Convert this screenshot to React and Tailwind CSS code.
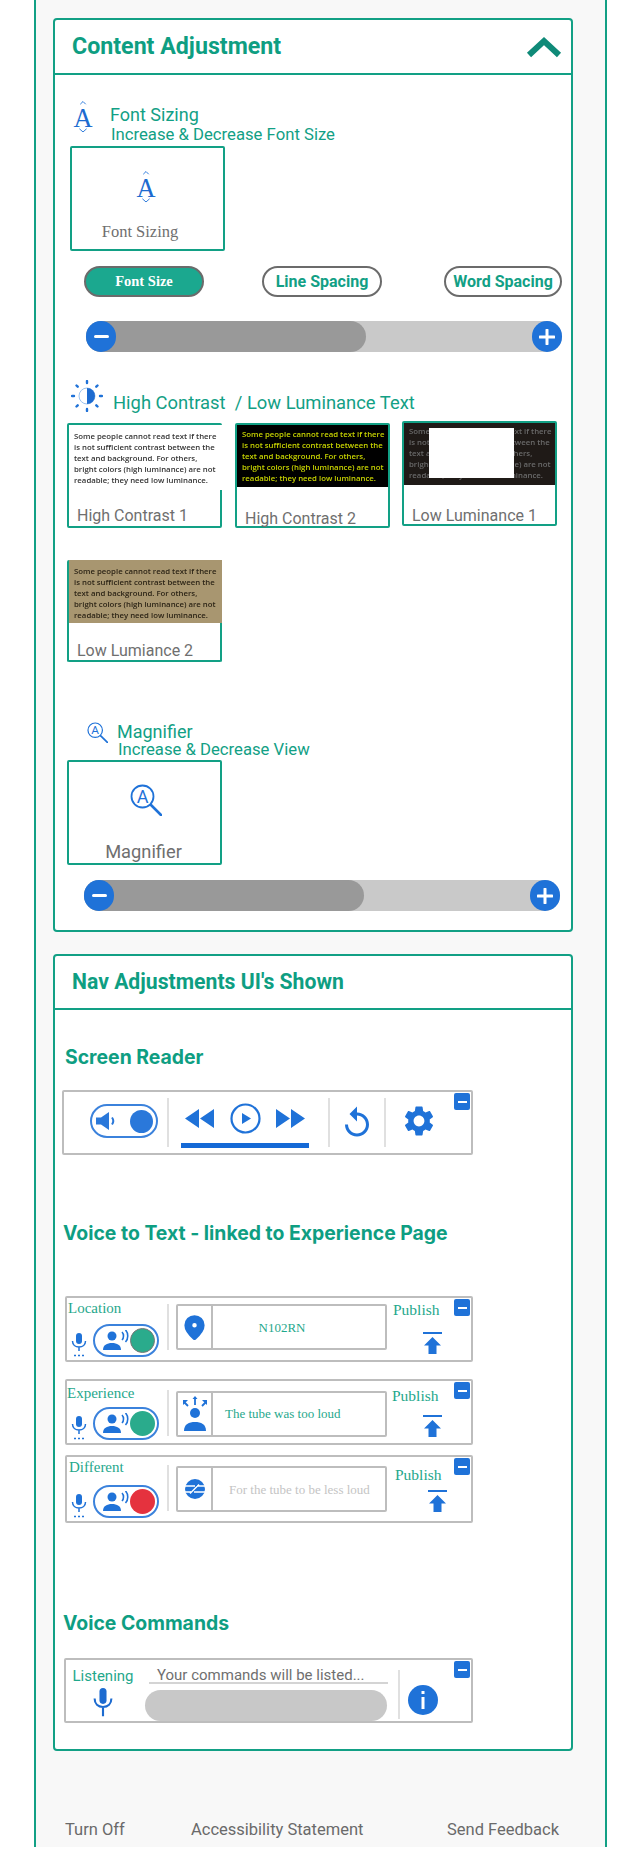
import React from 'react';
import { MapPin } from 'lucide-react';

const SAMPLE_LINES = [
  'Some people cannot read text if there',
  'is not sufficient contrast between the',
  'text and background. For others,',
  'bright colors (high luminance) are not',
  'readable; they need low luminance.',
];

// small blue minus button sitting in the corner of every widget
function MinusBadge({ className }) {
  return (
    <div className={`absolute right-[1px] w-[16px] h-[17px] bg-[#1f72d8] rounded-[2px] flex items-center justify-center ${className}`}>
      <div className="w-[9px] h-[2px] bg-white" />
    </div>
  );
}

function FontIcon() {
  return (
    <svg width="20" height="33" viewBox="0 0 22 36" className="shrink-0">
      <path d="M8 4.500 11 1.500 14 4.500" fill="none" stroke="#1f72d8" strokeWidth="1" />
      <path d="M7 31.500 11 35 15 31.500" fill="none" stroke="#1f72d8" strokeWidth="1" />
      <text x="11" y="30" textAnchor="middle" fontFamily="Liberation Serif" fontSize="29" fill="#1d6bd0">A</text>
    </svg>
  );
}

function MagnifierIcon({ size }) {
  return (
    <svg width={size} height={size} viewBox="0 0 32 32">
      <circle cx="12.500" cy="12.500" r="11" fill="none" stroke="#1f72d8" strokeWidth="1.800" />
      <path d="M21 21 31 31" stroke="#1f72d8" strokeWidth="2.600" strokeLinecap="round" />
      <text x="12.500" y="19" textAnchor="middle" fontFamily="Roboto" fontSize="18" fill="#1f72d8">A</text>
    </svg>
  );
}

function SliderBar({ className }) {
  return (
    <div className={`relative h-[31px] w-[476px] rounded-full bg-[#c9c9c9] ${className}`}>
      <div className="h-full w-[280px] rounded-full bg-[#999999]" />
      <div className="absolute left-0 top-0 w-[30px] h-[31px] rounded-full bg-[#1f72d8] flex items-center justify-center">
        <div className="w-[15px] h-[3px] bg-white rounded-full" />
      </div>
      <div className="absolute right-0 top-0 w-[30px] h-[31px] rounded-full bg-[#1f72d8] flex items-center justify-center">
        <svg width="16" height="16" viewBox="0 0 16 16"><path d="M8 1v14M1 8h14" stroke="#fff" strokeWidth="3" strokeLinecap="round" /></svg>
      </div>
    </div>
  );
}

function Thumb({ label, boxClass, imgClass, textClass, labelClass, children }) {
  return (
    <div className={`relative w-[155px] border-[2px] border-[#12a085] rounded-[2px] bg-white ${boxClass}`}>
      <div className={`px-[5px] text-[7.800px] leading-[11.100px] font-['Open_Sans',sans-serif] font-semibold whitespace-nowrap blur-[0.4px] ${imgClass} ${textClass}`}>
        {SAMPLE_LINES.map((line) => (
          <div key={line}>{line}</div>
        ))}
      </div>
      {children}
      <div className={`absolute left-[8px] text-[16px] leading-[20px] text-[#6f6f6f] font-['Roboto',sans-serif] ${labelClass}`}>{label}</div>
    </div>
  );
}

function SpeakerToggle({ dotClass }) {
  return (
    <div className="w-[66px] h-[33px] rounded-full border-[2px] border-[#3b82dc] flex items-center pl-[8px] pr-[2px] justify-between">
      <svg width="26" height="22" viewBox="0 0 26 22">
        <circle cx="9" cy="6" r="4.500" fill="#1f72d8" />
        <path d="M0 20c0-5 4-7 9-7s9 2 9 7z" fill="#1f72d8" />
        <path d="M19 2c2 2 2 6 0 8M22.500 0c3 3 3 9 0 12" fill="none" stroke="#1f72d8" strokeWidth="1.600" />
      </svg>
      <div className={`w-[25px] h-[25px] rounded-full ${dotClass}`} />
    </div>
  );
}

function SmallMic() {
  return (
    <svg width="16" height="24" viewBox="0 0 16 24" className="shrink-0">
      <rect x="5" y="0" width="6" height="11" rx="3" fill="#1f72d8" />
      <path d="M1.500 8c0 4 3 6 6.500 6s6.500-2 6.500-6M8 14v4" fill="none" stroke="#1f72d8" strokeWidth="1.500" />
      <path d="M3 22.500h2M7 22.500h2M11 22.500h2" stroke="#1f72d8" strokeWidth="1.500" />
    </svg>
  );
}

function UploadIcon() {
  return (
    <svg width="19" height="22" viewBox="0 0 19 22">
      <path d="M0 1h19" stroke="#1f72d8" strokeWidth="2" />
      <path d="M9.500 5 18 13.500h-4.500V22h-8v-8.500H1z" fill="#1f72d8" />
    </svg>
  );
}

function VoiceRow({ label, labelClass, dotClass, icon, text, textClass, publishClass, arrowClass, rowClass, sepClass, inputClass }) {
  return (
    <div className={`relative w-[408px] border-[2px] border-[#bdbdbd] rounded-[2px] flex font-normal ${rowClass}`}>
      <MinusBadge className="top-[1px]" />
      <div className="w-[100px] shrink-0 relative">
        <div className={`font-['Liberation_Serif',serif] text-[15px] leading-[18px] text-[#1fa88c] ${labelClass}`}>{label}</div>
        <div className="absolute left-[4px] bottom-[3px] flex items-end gap-[6px]">
          <SmallMic />
          <SpeakerToggle dotClass={dotClass} />
        </div>
      </div>
      <div className={`w-[2px] h-[46px] bg-[#e0e0e0] ${sepClass}`} />
      <div className={`ml-[7px] w-[211px] h-[46px] border-[2px] border-[#bdbdbd] rounded-[2px] flex ${inputClass}`}>
        <div className="w-[35px] shrink-0 border-r-[2px] border-[#bdbdbd] flex items-center justify-center">{icon}</div>
        <div className={`flex-1 font-['Liberation_Serif',serif] text-[13px] leading-[16px] ${textClass}`}>{text}</div>
      </div>
      <div className="flex-1 relative">
        <div className={`absolute font-['Liberation_Serif',serif] text-[15.500px] leading-[18px] text-[#1fa88c] ${publishClass}`}>Publish</div>
        <div className={`absolute ${arrowClass}`}><UploadIcon /></div>
      </div>
    </div>
  );
}

export default function App() {
  return (
    <div className="w-[640px] h-[1855px] bg-white overflow-hidden">
      <div className="ml-[34px] w-[573px] h-[1847px] border-x-[2px] border-[#12a085] bg-[#f8f8f8] pt-[18px] pl-[17px]">
        {/* Content Adjustment card */}
        <div className="w-[520px] h-[914px] border-[2px] border-[#12a085] rounded-[4px] bg-white">
          <div className="h-[55px] border-b-[2px] border-[#12a085] flex items-center justify-between pl-[17px] pr-[9px]">
            <h2 className="font-['Roboto',sans-serif] font-bold text-[23.200px] text-[#0e9e82]">Content Adjustment</h2>
            <svg width="36" height="22" viewBox="0 0 36 22"><path d="M3 19 18 5l15 14" fill="none" stroke="#0f8a78" strokeWidth="6" /></svg>
          </div>

          <div className="pt-[29px]">
            <div className="flex h-[42px] pl-[18px]">
              <div className="-mt-[4px]"><FontIcon /></div>
              <div className="ml-[17px] font-['Roboto',sans-serif] text-[#12a085]">
                <div className="text-[18px] leading-[22px]">Font Sizing</div>
                <div className="text-[16.700px] leading-[20px] ml-[1px] -mt-[1px]">Increase &amp; Decrease Font Size</div>
              </div>
            </div>

            <div className="ml-[15px] w-[155px] h-[105px] border-[2px] border-[#12a085] rounded-[2px] flex flex-col items-center">
              <div className="mt-[22px] ml-[-3px]"><FontIcon /></div>
              <div className="mt-[19px] ml-[-15px] font-['Liberation_Serif',serif] text-[16.500px] leading-[20px] text-[#6f6f6f]">Font Sizing</div>
            </div>

            <div className="mt-[15px] ml-[29px] w-[478px] flex">
              <div className="w-[120px] h-[31px] rounded-full border-[2px] border-[#6b6b6b] bg-[#1ba88f] flex items-center justify-center font-['Liberation_Serif',serif] font-bold text-[14.500px] text-white">Font Size</div>
              <div className="ml-[58px] w-[120px] h-[31px] rounded-full border-[2px] border-[#6b6b6b] bg-white flex items-center justify-center font-['Roboto',sans-serif] font-bold text-[16px] text-[#12a085]">Line Spacing</div>
              <div className="ml-[62px] w-[118px] h-[31px] rounded-full border-[2px] border-[#6b6b6b] bg-white flex items-center justify-center font-['Roboto',sans-serif] font-bold text-[16px] text-[#12a085] whitespace-nowrap">Word Spacing</div>
            </div>

            <SliderBar className="mt-[24px] ml-[31px]" />

            {/* High contrast */}
            <div className="flex items-start h-[40px] mt-[29px] pl-[15px]">
              <svg width="32" height="32" viewBox="0 0 32 32" className="mt-[-1px] ml-[1px]">
                <circle cx="16" cy="16" r="8" fill="none" stroke="#9cc2ee" strokeWidth="1" />
                <path d="M16 8a8 8 0 0 1 0 16z" fill="#1d6bd0" />
                <g stroke="#1f72d8" strokeWidth="2.400" strokeLinecap="round">
                  <path d="M16 1v2M16 29v2M1 16h2M29 16h2M5.500 5.500l1.200 1.200M25.300 25.300l1.200 1.200M5.500 26.500l1.200-1.200M25.300 6.700l1.200-1.200" />
                </g>
              </svg>
              <div className="ml-[10px] mt-[11px] font-['Roboto',sans-serif] text-[18.400px] leading-[22px] text-[#12a085] whitespace-pre">High Contrast  / Low Luminance Text</div>
            </div>

            <div className="ml-[12px] grid grid-cols-[155px_155px_155px] gap-x-[13px] gap-y-[32px] items-start">
              <Thumb label="High Contrast 1" boxClass="h-[105px] mt-[2px]" imgClass="h-[65px] pt-[6px] -mr-[2px]" textClass="bg-white text-[#333333]" labelClass="top-[81px]" />
              <Thumb label="High Contrast 2" boxClass="h-[105px] mt-[2px]" imgClass="h-[62px] pt-[4px]" textClass="bg-black text-[#c8d400]" labelClass="top-[84px]" />
              <Thumb label="Low Luminance 1" boxClass="h-[105px] -ml-[1px]" imgClass="h-[62px] pt-[3px]" textClass="bg-[#1f1a17] text-[#6a6a6a]" labelClass="top-[83px]">
                <div className="absolute left-[25px] top-[5px] w-[85px] h-[50px] bg-white" />
              </Thumb>
              <Thumb label="Low Lumiance 2" boxClass="h-[102px] border-t-0" imgClass="h-[63px] pt-[6px] -mr-[2px]" textClass="bg-[#a89670] text-[#2c2416]" labelClass="top-[81px]" />
            </div>

            {/* Magnifier */}
            <div className="flex h-[39px] mt-[59px] pl-[32px]">
              <div className="mt-[1px]"><MagnifierIcon size={21} /></div>
              <div className="ml-[9px] font-['Roboto',sans-serif] text-[#12a085]">
                <div className="text-[18px] leading-[22px]">Magnifier</div>
                <div className="text-[16.700px] leading-[18px] ml-[1px] -mt-[2px]">Increase &amp; Decrease View</div>
              </div>
            </div>

            <div className="ml-[12px] w-[155px] h-[105px] border-[2px] border-[#12a085] rounded-[2px] flex flex-col items-center">
              <div className="mt-[22px] ml-[3px]"><MagnifierIcon size={32} /></div>
              <div className="mt-[25px] ml-[-2px] font-['Roboto',sans-serif] text-[18.300px] leading-[22px] text-[#6f6f6f]">Magnifier</div>
            </div>

            <SliderBar className="mt-[15px] ml-[29px]" />
          </div>
        </div>

        {/* Nav adjustments card */}
        <div className="mt-[22px] w-[520px] h-[797px] border-[2px] border-[#12a085] rounded-[4px] bg-white">
          <div className="h-[54px] border-b-[2px] border-[#12a085] flex items-center pl-[17px]">
            <h2 className="font-['Roboto',sans-serif] font-bold text-[21.200px] text-[#0e9e82]">Nav Adjustments UI's Shown</h2>
          </div>

          <div className="pt-[35px] font-['Inter',sans-serif] font-bold text-[19.400px] leading-[24px] text-[#0e9e82]">
            <h3 className="pl-[10px]">Screen Reader</h3>

            {/* Screen reader toolbar */}
            <div className="relative mt-[21px] ml-[7px] w-[411px] h-[65px] border-[2px] border-[#bdbdbd] rounded-[2px] flex items-start">
              <MinusBadge className="top-[1px]" />
              <div className="ml-[26px] mt-[12px] w-[68px] h-[34px] rounded-full border-[2px] border-[#3b82dc] flex items-center justify-between pl-[4px] pr-[3px]">
                <svg width="20" height="20" viewBox="0 0 20 20">
                  <path d="M0 6.500h5L13 1v18l-8-5.500H0z" fill="#2a78da" />
                  <path d="M16 6.500c1.500 2 1.500 5 0 7" fill="none" stroke="#2a78da" strokeWidth="2" />
                </svg>
                <div className="w-[23px] h-[23px] rounded-full bg-[#2a78da]" />
              </div>
              <div className="ml-[9px] mt-[6px] w-[2px] h-[49px] bg-[#e0e0e0]" />
              <div className="ml-[12px] w-[128px] h-full relative">
                <div className="flex items-center justify-between px-[4px] h-[30px] mt-[11px]">
                  <svg width="29" height="19" viewBox="0 0 29 19"><path d="M14 0v19L0 9.500zM29 0v19L15 9.500z" fill="#1f72d8" /></svg>
                  <svg width="31" height="31" viewBox="0 0 31 31">
                    <circle cx="15.500" cy="15.500" r="14" fill="none" stroke="#1f72d8" strokeWidth="2.200" />
                    <path d="M12 10v11l9-5.500z" fill="#1f72d8" />
                  </svg>
                  <svg width="29" height="19" viewBox="0 0 29 19"><path d="M0 0v19l14-9.500zM15 0v19l14-9.500z" fill="#1f72d8" /></svg>
                </div>
                <div className="mt-[10px] h-[5px] bg-[#1469d6]" />
              </div>
              <div className="ml-[19px] mt-[6px] w-[2px] h-[49px] bg-[#e0e0e0]" />
              <div className="w-[54px] h-[61px] flex items-center justify-center">
                <svg width="36" height="36" viewBox="0 0 24 24"><path fill="#1f72d8" d="M12 5V1L7 6l5 5V7c3.310 0 6 2.690 6 6s-2.690 6-6 6-6-2.690-6-6H4c0 4.420 3.580 8 8 8s8-3.580 8-8-3.580-8-8-8z" /></svg>
              </div>
              <div className="mt-[6px] w-[2px] h-[49px] bg-[#e0e0e0]" />
              <div className="ml-[15px] mt-[11px]">
                <svg width="36" height="36" viewBox="0 0 24 24"><path fill="#1f72d8" d="M19.140 12.940c.04-.3.06-.61.06-.94 0-.32-.02-.64-.07-.94l2.030-1.580c.18-.14.23-.41.12-.61l-1.920-3.320c-.12-.22-.37-.29-.59-.22l-2.390.96c-.5-.38-1.030-.7-1.620-.94l-.36-2.540c-.04-.24-.24-.41-.48-.41h-3.840c-.24 0-.43.17-.47.41l-.36 2.540c-.59.24-1.130.57-1.620.94l-2.390-.96c-.22-.08-.47 0-.59.22L2.740 8.870c-.12.21-.08.47.12.61l2.030 1.580c-.05.3-.09.63-.09.94s.02.64.07.94l-2.030 1.580c-.18.14-.23.41-.12.61l1.920 3.320c.12.22.37.29.59.22l2.390-.96c.5.38 1.030.7 1.620.94l.36 2.540c.05.24.24.41.48.41h3.840c.24 0 .44-.17.47-.41l.36-2.540c.59-.24 1.130-.56 1.620-.94l2.390.96c.22.08.47 0 .59-.22l1.920-3.320c.12-.22.07-.47-.12-.61l-2.010-1.580zM12 15.600c-1.980 0-3.600-1.620-3.600-3.600s1.620-3.600 3.600-3.600 3.600 1.620 3.600 3.600-1.620 3.600-3.600 3.600z" /></svg>
              </div>
            </div>

            <h3 className="mt-[66px] pl-[8px]">Voice to Text - linked to Experience Page</h3>

            {/* Voice to text rows */}
            <div className="mt-[51px] ml-[10px]">
              <VoiceRow
                label="Location"
                labelClass="pl-[1px] pt-[1px]"
                dotClass="bg-[#2aab8c] border border-[#777777]"
                icon={<MapPin size={27} color="#1f72d8" fill="#1f72d8" stroke="#1f72d8" className="[&>circle]:fill-white" />}
                text="N102RN"
                textClass="text-[#1fa88c] text-center pt-[14px] pr-[34px]"
                publishClass="left-[6px] top-[3px]"
                arrowClass="left-[36px] top-[34px]"
                rowClass="h-[66px]"
                sepClass="mt-[6px]"
                inputClass="mt-[6px]"
              />
              <VoiceRow
                label="Experience"
                labelClass="pt-[3px]"
                dotClass="bg-[#2aab8c]"
                icon={
                  <svg width="24" height="36" viewBox="0 0 24 36">
                    <circle cx="12" cy="17" r="5" fill="#1f72d8" />
                    <path d="M1 35c0-7 5-9 11-9s11 2 11 9z" fill="#1f72d8" />
                    <path d="M12 9V2M5 10 1 6M19 10l4-4" stroke="#1f72d8" strokeWidth="1.800" />
                    <path d="M9.500 3 12 0l2.500 3zM0 9V4h5zM24 9V4h-5z" fill="#1f72d8" />
                  </svg>
                }
                text="The tube was too loud"
                textClass="text-[#1fa88c] pl-[12px] pt-[13px]"
                publishClass="left-[5px] top-[6px]"
                arrowClass="left-[36px] top-[34px]"
                rowClass="h-[66px] mt-[17px]"
                sepClass="mt-[9px]"
                inputClass="mt-[10px]"
              />
              <VoiceRow
                label="Different"
                labelClass="pl-[2px] pt-[1px]"
                dotClass="bg-[#e5323e]"
                icon={
                  <svg width="20" height="20" viewBox="0 0 20 20">
                    <circle cx="10" cy="10" r="10" fill="#1f72d8" />
                    <path d="M0 7h10M12 7h8M0 13h6M9 13h11M5 14.500l9-9" stroke="#fff" strokeWidth="1.400" />
                  </svg>
                }
                text="For the tube to be less loud"
                textClass="text-[#c4c4c4] pl-[16px] pt-[14px]"
                publishClass="left-[8px] top-[9px]"
                arrowClass="left-[41px] top-[33px]"
                rowClass="h-[68px] mt-[10px]"
                sepClass="mt-[8px]"
                inputClass="mt-[9px]"
              />
            </div>

            <h3 className="mt-[88px] pl-[8px]">Voice Commands</h3>

            {/* Voice commands box */}
            <div className="relative mt-[23px] ml-[9px] w-[409px] h-[65px] border-[2px] border-[#bdbdbd] rounded-[2px] overflow-hidden flex font-['Roboto',sans-serif] font-normal">
              <MinusBadge className="top-[1px]" />
              <div className="w-[74px] shrink-0 flex flex-col items-center">
                <div className="mt-[7px] text-[15px] leading-[18px] text-[#1fa88c]">Listening</div>
                <svg width="20" height="30" viewBox="0 0 22 34" className="mt-[3px]">
                  <rect x="7" y="0" width="8" height="18" rx="4" fill="#1d6bd0" />
                  <path d="M1.500 12c0 6 4 9.500 9.500 9.500s9.500-3.500 9.500-9.500M11 21.500V32" fill="none" stroke="#1d6bd0" strokeWidth="2.400" />
                </svg>
              </div>
              <div className="ml-[5px] w-[242px] shrink-0 flex flex-col">
                <div className="ml-[4px] w-[239px] h-[24px] border-b-[2px] border-[#d4d4d4] pl-[8px] pt-[7px] text-[15px] leading-[17px] text-[#6f6f6f]">Your commands will be listed...</div>
                <div className="mt-[6px] h-[34px] rounded-[20px] bg-[#c8c8c8]" />
              </div>
              <div className="ml-[11px] mt-[10px] w-[2px] h-[49px] bg-[#e0e0e0]" />
              <div className="ml-[8px] mt-[25px] w-[30px] h-[30px] rounded-full bg-[#1f72d8] flex items-center justify-center">
                <svg width="6" height="18" viewBox="0 0 6 18"><rect x="1.500" y="0" width="3" height="3" fill="#fff" /><rect x="1.500" y="6" width="3" height="12" fill="#fff" /></svg>
              </div>
            </div>
          </div>
        </div>

        <div className="mt-[68px] w-[520px] relative h-[22px] font-['Roboto',sans-serif] text-[16.500px] leading-[22px] text-[#6a6a6a]">
          <span className="absolute left-[12px]">Turn Off</span>
          <span className="absolute left-[138px]">Accessibility Statement</span>
          <span className="absolute left-[394px]">Send Feedback</span>
        </div>
      </div>
    </div>
  );
}
